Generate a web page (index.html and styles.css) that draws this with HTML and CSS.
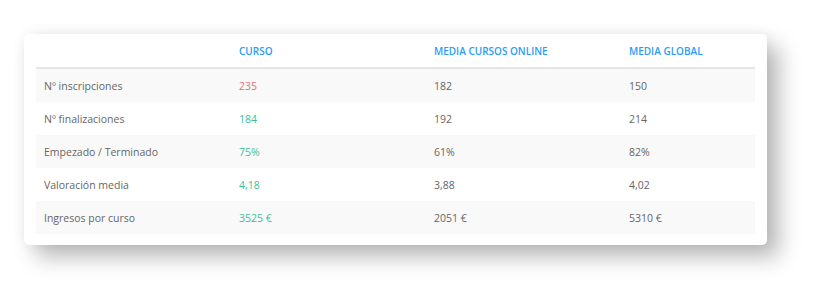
FILE: index.html
```html
<!DOCTYPE html>
<html lang="es">
<head>
<meta charset="utf-8">
<link rel="stylesheet" href="styles.css">
</head>
<body>
<div class="card">
  <table class="stats">
    <colgroup>
      <col class="c1"><col class="c2"><col class="c3"><col class="c4">
    </colgroup>
    <thead>
      <tr><th></th><th>CURSO</th><th>MEDIA CURSOS ONLINE</th><th>MEDIA GLOBAL</th></tr>
    </thead>
    <tbody>
      <tr><td>Nº inscripciones</td><td class="bad">235</td><td>182</td><td>150</td></tr>
      <tr><td>Nº finalizaciones</td><td class="good">184</td><td>192</td><td>214</td></tr>
      <tr><td>Empezado / Terminado</td><td class="good">75%</td><td>61%</td><td>82%</td></tr>
      <tr><td>Valoración media</td><td class="good">4,18</td><td>3,88</td><td>4,02</td></tr>
      <tr><td>Ingresos por curso</td><td class="good">3525 €</td><td>2051 €</td><td>5310 €</td></tr>
    </tbody>
  </table>
</div>
</body>
</html>
```
FILE: styles.css
```css
html, body {
  margin: 0;
  padding: 0;
  background: #ffffff;
}
body {
  width: 837px;
  height: 305px;
  padding-top: 34px;
  padding-left: 24px;
  box-sizing: border-box;
  font-family: "Open Sans", "Liberation Sans", sans-serif;
}
.card {
  width: 743px;
  height: 211px;
  box-sizing: border-box;
  padding: 0 12px 11px 12px;
  background: #ffffff;
  border-radius: 5px;
  box-shadow: 12px 12px 22px rgba(0, 0, 0, 0.28), 0 0 14px rgba(0, 0, 0, 0.06);
}
.stats {
  width: 719px;
  border-collapse: collapse;
  table-layout: fixed;
}
.c1, .c2, .c3 { width: 195px; }
.c4 { width: 134px; }
.stats th {
  height: 33px;
  padding: 0 8px;
  text-align: left;
  font-size: 10px;
  font-weight: 600;
  color: #2a9df4;
  border-bottom: 2px solid #e6e6e6;
  vertical-align: middle;
}
.stats td {
  height: 33px;
  padding: 0 8px;
  font-size: 10.5px;
  color: #666666;
  vertical-align: middle;
}
.stats tbody tr:nth-child(odd) td {
  background: #f9f9f9;
}
.stats td.bad { color: #f26b73; }
.stats td.good { color: #3dbf9a; }
```
